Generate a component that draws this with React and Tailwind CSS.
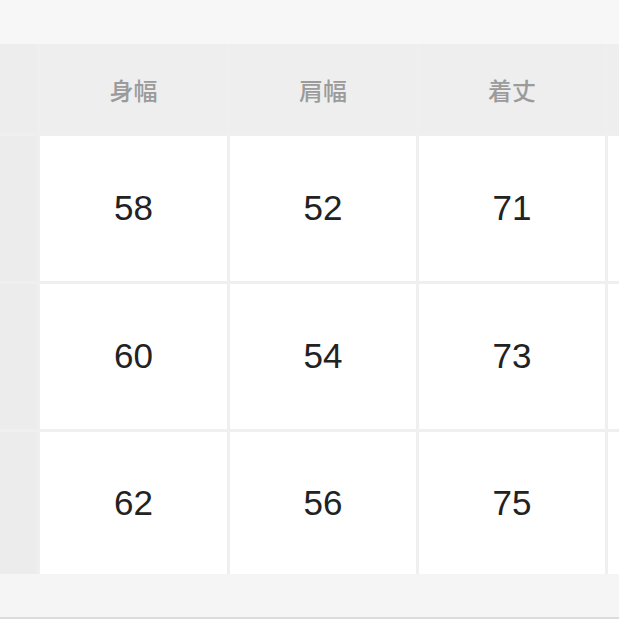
const headers = ['身幅', '肩幅', '着丈'];
const rows = [
  [58, 52, 71],
  [60, 54, 73],
  [62, 56, 75],
];

export default function App() {
  return (
    <div className="w-[619px] h-[619px] overflow-hidden bg-[#f7f7f7] flex flex-col">
      <div className="h-[44px] shrink-0" />
      <div className="grid grid-cols-[37px_187px_186px_186px_1fr] grid-rows-[89px_145px_145px_142px] gap-[3px] bg-[#efefef]">
        <div className="bg-[#ededed]" />
        {headers.map(h => (
          <div
            key={h}
            className="bg-[#eeeeee] flex items-center justify-center text-[24px] font-medium text-[#9b9b9b] font-['Noto_Sans_CJK_JP',sans-serif] pt-[2px]"
          >
            {h}
          </div>
        ))}
        <div className="bg-[#eeeeee]" />
        {rows.map((r, i) => [
          <div key={`l${i}`} className="bg-[#ececec]" />,
          ...r.map((v, j) => (
            <div
              key={`${i}-${j}`}
              className="bg-white flex items-center justify-center text-[35px] text-[#222] font-['Liberation_Sans',Arial,sans-serif]"
            >
              {v}
            </div>
          )),
          <div key={`r${i}`} className="bg-white" />,
        ])}
      </div>
      <div className="flex-1 bg-[#f5f5f5] border-b-2 border-[#dcdcdc]" />
    </div>
  );
}
